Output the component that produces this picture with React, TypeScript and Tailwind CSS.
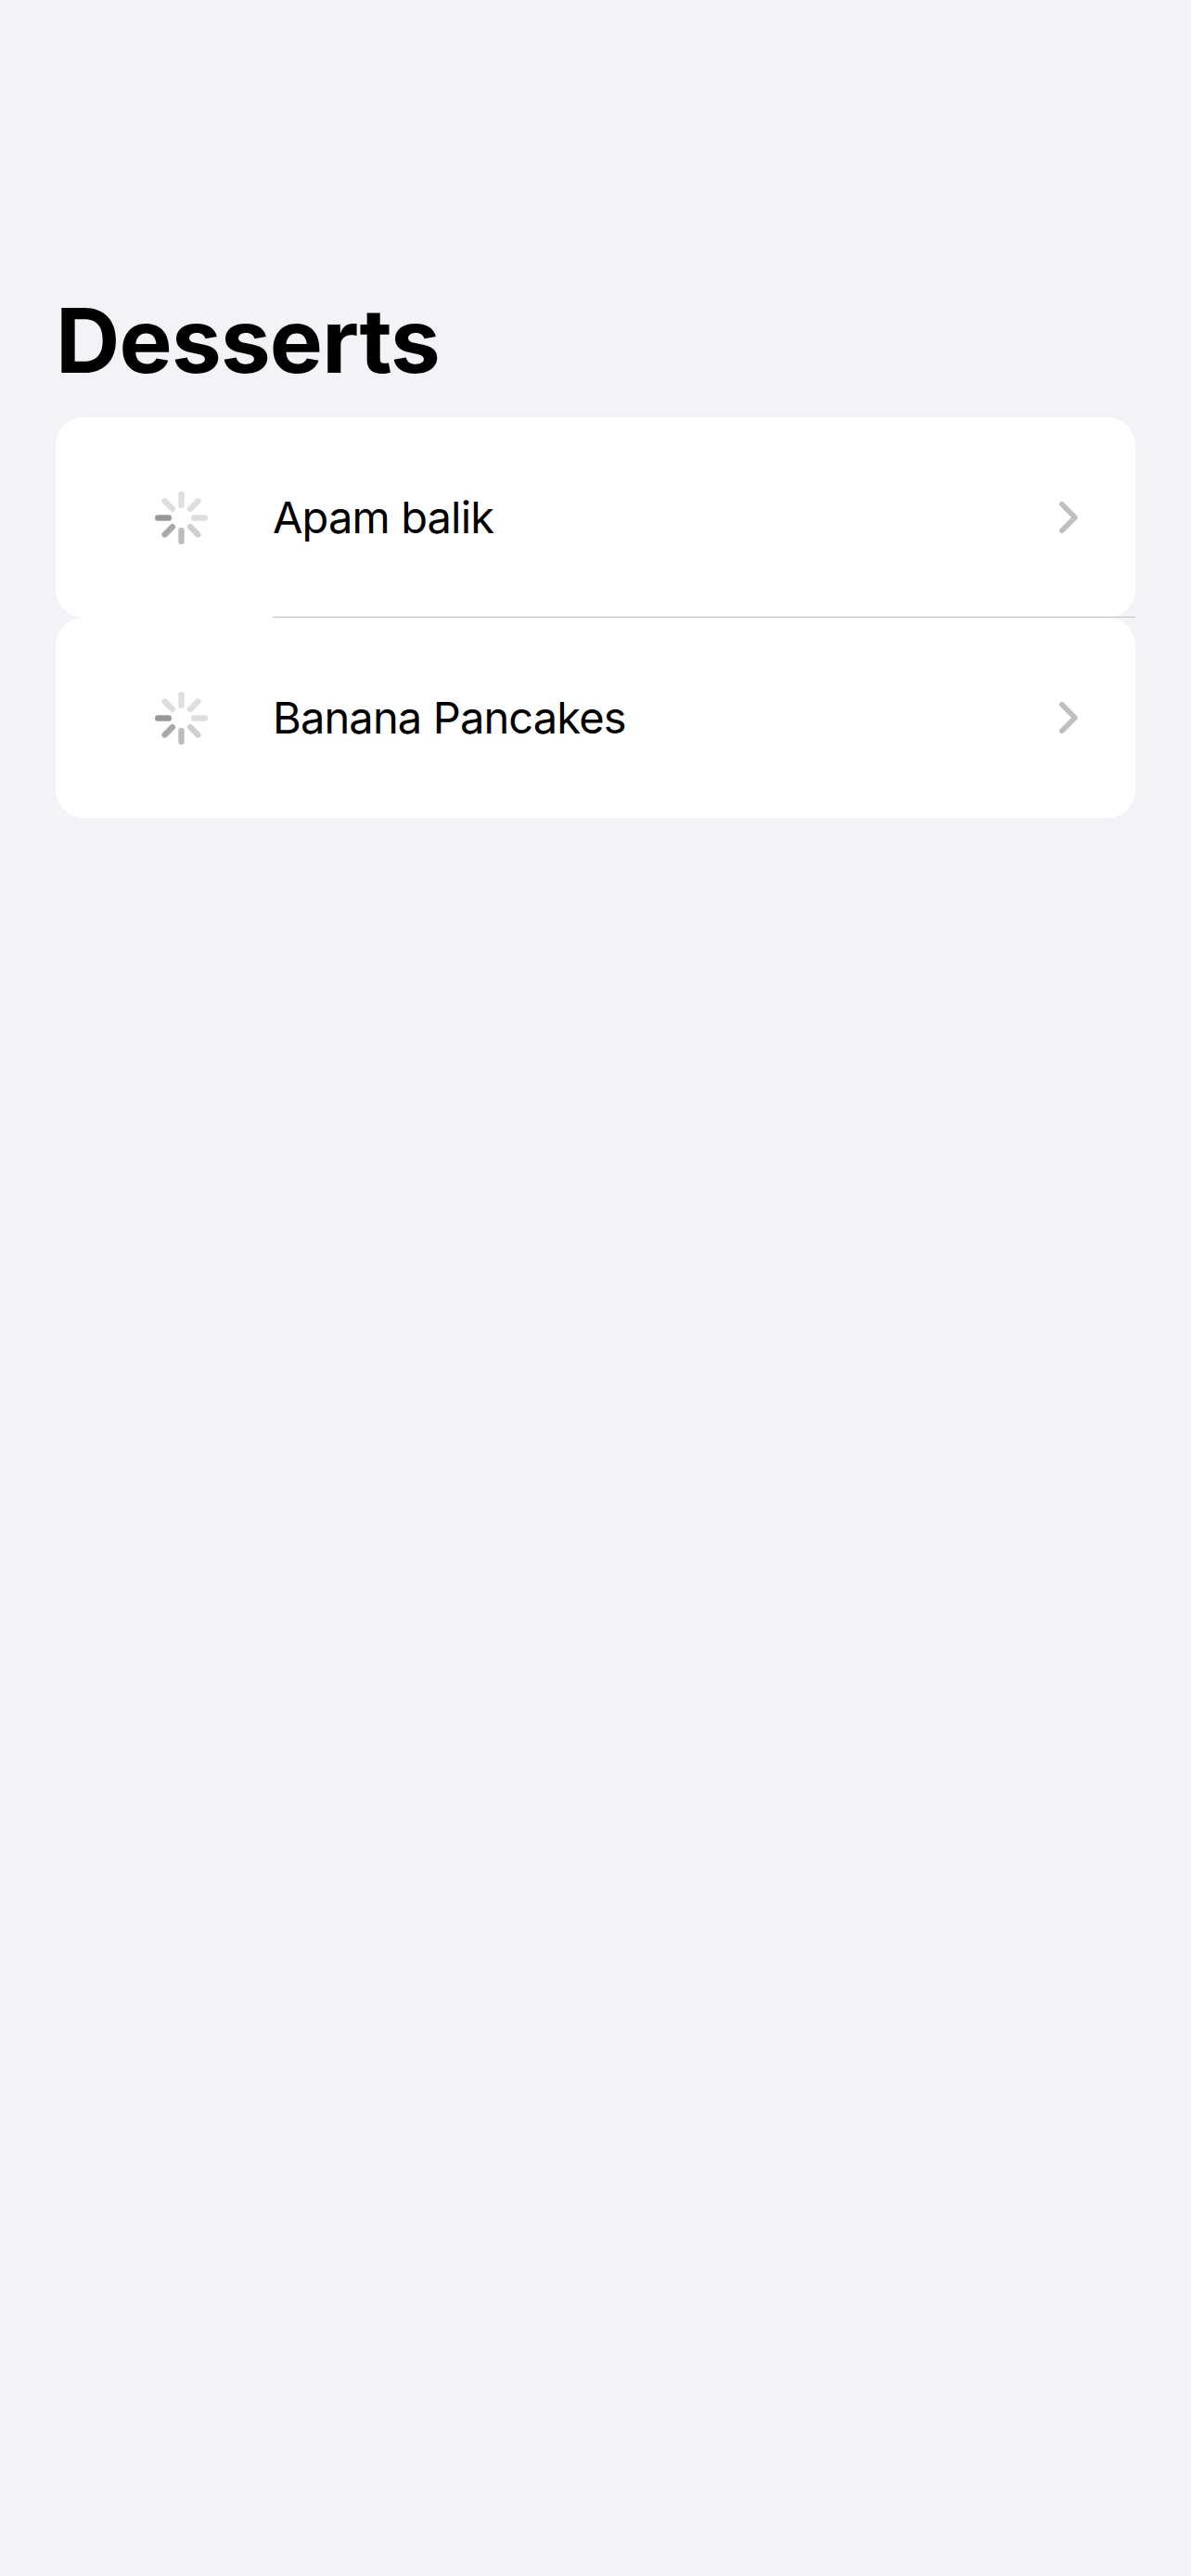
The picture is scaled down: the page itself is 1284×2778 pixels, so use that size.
const spokes = ["#dedede", "#dedede", "#dedede", "#cfcfd1", "#bdbdbf", "#a9a9ab", "#99999b", "#dedede"];

function Spinner() {
  return (
    <svg width="60" height="60" viewBox="-30.5 -30.5 60 60" className="ml-[105px] shrink-0">
      {spokes.map((c, i) => (
        <line key={i} x1="0" y1="-13.7" x2="0" y2="-25.3" stroke={c} strokeWidth="6.4" strokeLinecap="round" transform={`rotate(${i * 45})`} />
      ))}
    </svg>
  );
}

function Row({ name, divider }: { name: string; divider?: boolean }) {
  return (
    <li className="relative flex h-[216px] items-center rounded-[30px] bg-white">
      <Spinner />
      <span className="ml-[69px] flex-1 text-[47px] leading-[60px] tracking-[-0.85px]">{name}</span>
      <svg width="24" height="40" viewBox="0 0 24 40" className="mr-[60px]" fill="none" stroke="#bfbfbf" strokeWidth="5.6" strokeLinecap="round" strokeLinejoin="round">
        <path d="M4.8 5.8 L19 20 L4.8 34.2" />
      </svg>
      {divider && <div className="absolute right-0 bottom-0 left-[234px] h-px bg-[#c0c0c2]" />}
    </li>
  );
}

export default function App() {
  return (
    <main className="min-h-[2778px] bg-[#f2f2f7] px-[60px] pt-[307px] font-[Inter,sans-serif] text-black">
      <h1 className="h-[143px] text-[96px] leading-[120px] font-bold tracking-[-0.8px]">Desserts</h1>
      <ul>
        <Row name="Apam balik" divider />
        <Row name="Banana Pancakes" />
      </ul>
    </main>
  );
}
